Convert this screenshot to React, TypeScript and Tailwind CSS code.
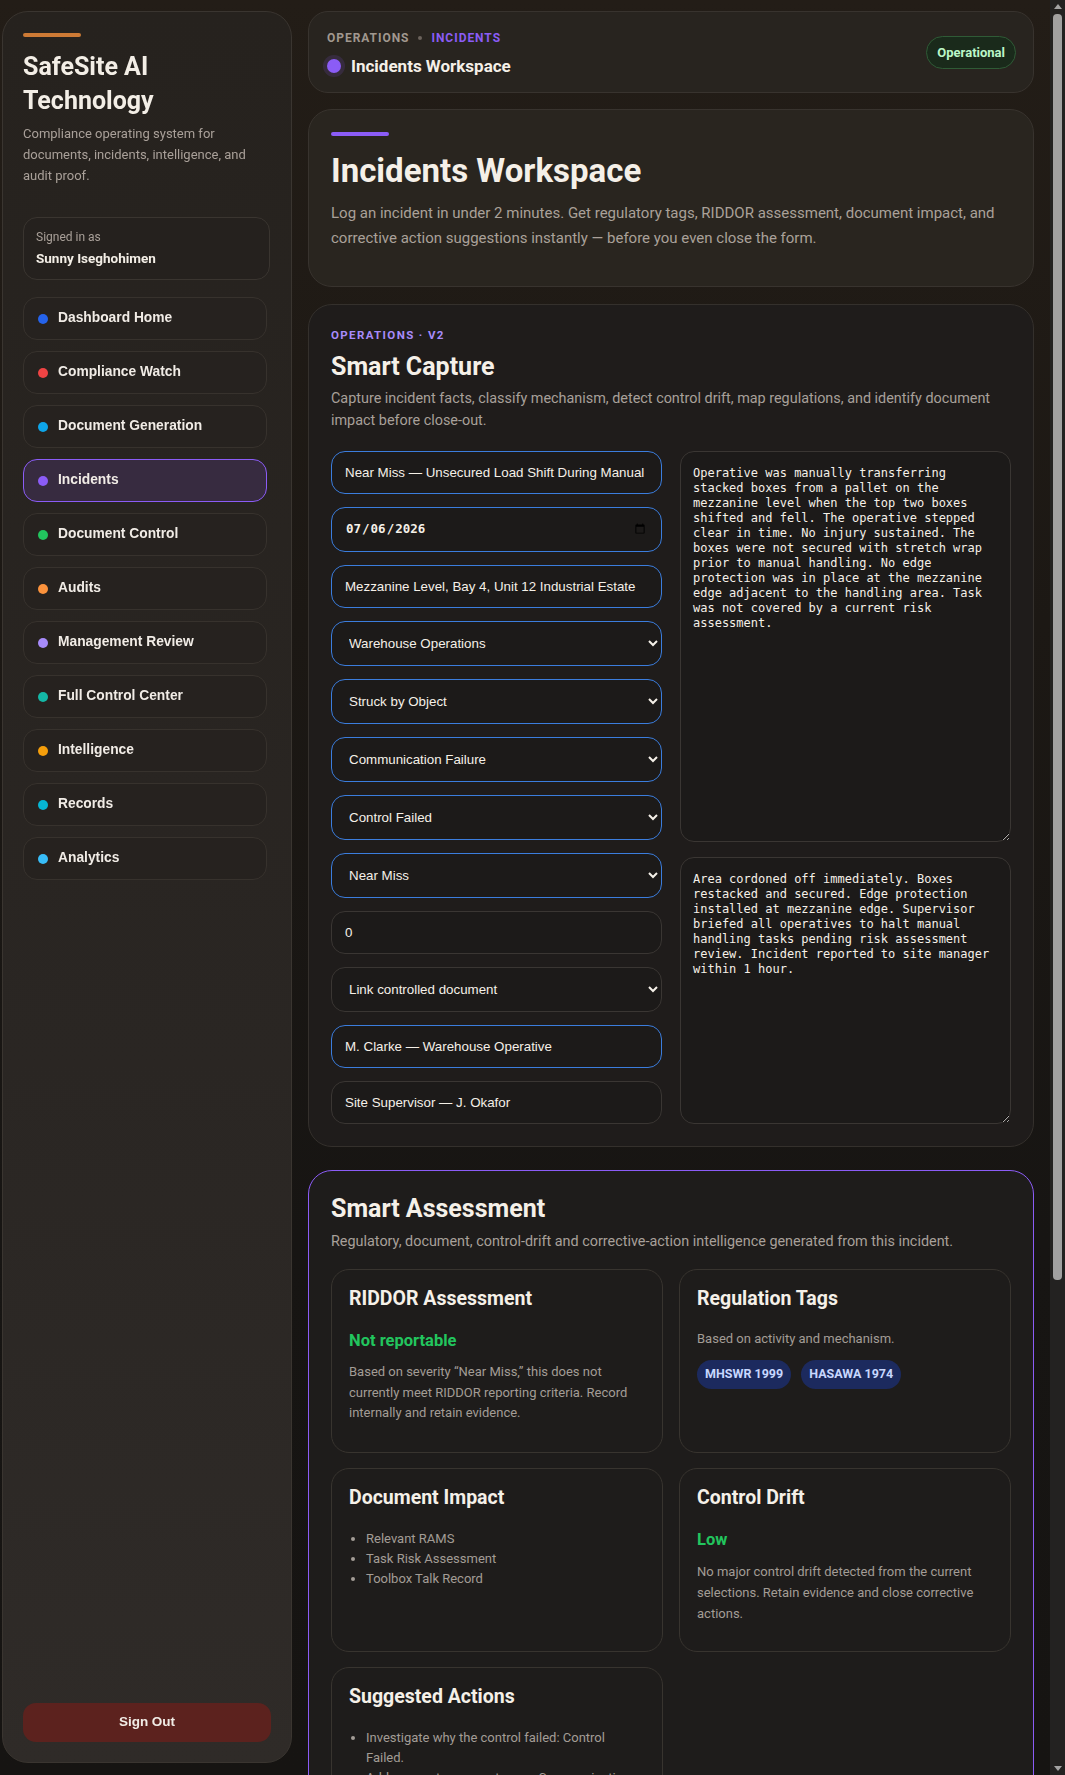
import React, { useEffect, useRef } from "react";

const navItems: { label: string; dot: string; active?: boolean }[] = [
  { label: "Dashboard Home", dot: "bg-[#2563eb]" },
  { label: "Compliance Watch", dot: "bg-[#ef4444]" },
  { label: "Document Generation", dot: "bg-[#0ea5e9]" },
  { label: "Incidents", dot: "bg-[#8b5cf6]", active: true },
  { label: "Document Control", dot: "bg-[#22c55e]" },
  { label: "Audits", dot: "bg-[#fb923c]" },
  { label: "Management Review", dot: "bg-[#a78bfa]" },
  { label: "Full Control Center", dot: "bg-[#14b8a6]" },
  { label: "Intelligence", dot: "bg-[#f59e0b]" },
  { label: "Records", dot: "bg-[#06b6d4]" },
  { label: "Analytics", dot: "bg-[#38bdf8]" },
];

const inputBase =
  "w-full rounded-[14px] border bg-[#1c1a19] px-[13px] text-[13.33px] text-[#f5f0e8] font-['Liberation_Sans',Arial,sans-serif] outline-none";

function TextField({ value, blue }: { value: string; blue?: boolean }) {
  return (
    <input
      type="text"
      defaultValue={value}
      className={`${inputBase} h-[43px] ${blue ? "border-[#3b7ddd]" : "border-[#3a3633]"}`}
    />
  );
}

function SelectField({ value, blue }: { value: string; blue?: boolean }) {
  return (
    <select
      defaultValue={value}
      className={`${inputBase} h-[45px] ${blue ? "border-[#3b7ddd]" : "border-[#3a3633]"}`}
    >
      <option value={value}>{value}</option>
    </select>
  );
}

function SubCard({ title, children }: { title: string; children: React.ReactNode }) {
  return (
    <div className="min-h-[184px] rounded-[18px] border border-[#38342f] bg-[#1e1c1b] px-[17px] pt-[15px] pb-5">
      <h3 className="text-[19.5px] font-bold leading-[28px] text-[#f5f0e8]">{title}</h3>
      {children}
    </div>
  );
}

function ScrollbarStrip() {
  return (
    <div className="flex h-screen w-[15px] shrink-0 flex-col items-center bg-[#232221]">
      <div className="mt-[4px] h-0 w-0 border-x-[4px] border-b-[5px] border-x-transparent border-b-[#a3a3a3]" />
      <div className="mt-[5px] h-[1266px] w-[9px] rounded-[4px] bg-[#a1a1a1]" />
      <div className="mt-auto mb-[4px] h-0 w-0 border-x-[4px] border-t-[5px] border-x-transparent border-t-[#a3a3a3]" />
    </div>
  );
}

export default function App() {
  const ta2 = useRef<HTMLTextAreaElement>(null);
  useEffect(() => {
    const el = ta2.current;
    if (el) {
      el.focus();
      const n = el.value.length;
      el.setSelectionRange(n, n);
    }
  }, []);

  return (
    <div className="flex h-screen w-full overflow-hidden bg-[#181614]">
      <div className="h-screen w-[1050px] shrink-0 overflow-y-auto [color-scheme:dark] bg-[linear-gradient(180deg,#231d17_0%,#1c1814_35%,#171513_70%,#161412_100%)] font-['Roboto',sans-serif] text-[#f5f0e8]">
        <div className="flex w-[1050px] items-start gap-4 pl-[2px] pr-4 pt-[11px] pb-8">
          {/* Sidebar */}
          <aside className="sticky top-[11px] flex h-[1752px] w-[290px] shrink-0 flex-col rounded-[26px] border border-[#3a3530] bg-[linear-gradient(180deg,#26221e_0%,#2a2623_60%,#2f2b28_100%)] px-5 pt-[21px] pb-5">
            <div className="h-1 w-[58px] rounded-full bg-[#cd7a35]" />
            <h1 className="mt-[13px] text-[25px] font-bold leading-[34px] text-[#f3eee6]">
              SafeSite AI
              <br />
              Technology
            </h1>
            <p className="mt-[5px] text-[13px] leading-[21px] text-[#a9a099]">
              Compliance operating system for documents, incidents, intelligence, and audit proof.
            </p>
            <div className="mt-[31px] h-[63px] w-[247px] rounded-[14px] border border-[#3a3530] bg-[#25211e] px-[12px] pt-[10px]">
              <div className="text-[12px] leading-[18px] text-[#a9a099]">Signed in as</div>
              <div className="mt-[3px] text-[13.5px] font-bold leading-[18px] text-[#f3eee6]">Sunny Iseghohimen</div>
            </div>
            <nav className="mt-[17px] flex w-[244px] flex-col gap-[11px]">
              {navItems.map((item) => (
                <div
                  key={item.label}
                  className={
                    item.active
                      ? "flex h-[43px] items-center gap-[10px] rounded-[14px] border border-[#8b5cf6] bg-[#372b40] pl-[14px]"
                      : "flex h-[43px] items-center gap-[10px] rounded-[14px] border border-[#37322d] bg-[#26221f] pl-[14px]"
                  }
                >
                  <span className={`h-[10px] w-[10px] rounded-full ${item.dot}`} />
                  <span className="font-['Liberation_Sans',Arial,sans-serif] text-[13.8px] font-bold text-[#f1ece6]">
                    {item.label}
                  </span>
                </div>
              ))}
            </nav>
            <button className="mt-auto h-[39px] w-[248px] rounded-[13px] bg-[#5c221e] font-['Liberation_Sans',Arial,sans-serif] text-[13.5px] font-bold text-[#f1ece6]">
              Sign Out
            </button>
          </aside>

          {/* Main */}
          <main className="flex w-[726px] shrink-0 flex-col">
            {/* Header */}
            <header className="flex h-[82px] items-start justify-between rounded-[20px] border border-[#38332e] bg-[#28241f] pl-[18px] pr-[17px] pt-[18px]">
              <div className="flex flex-col">
                <div className="flex items-center text-[12px] font-bold uppercase leading-[16px] tracking-[0.08em]">
                  <span className="text-[#a1988f]">Operations</span>
                  <span className="mx-[9px] h-[4px] w-[4px] rounded-full bg-[#6b635c]" />
                  <span className="text-[#8b5cf6]">Incidents</span>
                </div>
                <div className="mt-[8px] flex items-center gap-[10px]">
                  <span className="h-[14px] w-[14px] rounded-full bg-[#8b5cf6] shadow-[0_0_0_4px_rgba(139,92,246,0.14)]" />
                  <span className="text-[17px] font-bold leading-[24px] text-[#f5f0e8]">Incidents Workspace</span>
                </div>
              </div>
              <span className="mt-[6px] flex h-[33px] items-center rounded-full border border-[#2f5b36] bg-[#1a2a1b] px-[10px] text-[13px] font-bold text-[#bbf7c8]">
                Operational
              </span>
            </header>

            {/* Hero */}
            <section className="mt-4 rounded-[24px] border border-[#38332e] bg-[#29251f] px-[22px] pt-[22px] pb-[36px]">
              <div className="h-1 w-[58px] rounded-full bg-[#8b5cf6]" />
              <h1 className="mt-[16px] text-[33px] font-bold leading-[38px] text-[#f5f0e8]">Incidents Workspace</h1>
              <p className="mt-[11px] text-[15px] leading-[24.5px] text-[#aaa199]">
                Log an incident in under 2 minutes. Get regulatory tags, RIDDOR assessment, document impact, and
                corrective action suggestions instantly — before you even close the form.
              </p>
            </section>

            {/* Smart Capture */}
            <section className="mt-[17px] rounded-[24px] border border-[#34302c] bg-[#1f1c1b] px-[22px] pt-[22px] pb-[22px]">
              <div className="text-[11.5px] font-bold uppercase leading-[16px] tracking-[0.12em] text-[#a78bfa]">
                Operations · V2
              </div>
              <h2 className="mt-[8px] text-[25px] font-bold leading-[32px] text-[#f5f0e8]">Smart Capture</h2>
              <p className="mt-[5px] text-[14.4px] leading-[22px] text-[#a8a09a]">
                Capture incident facts, classify mechanism, detect control drift, map regulations, and identify
                document impact before close-out.
              </p>
              <div className="mt-[19px] grid grid-cols-2 gap-[18px]">
                <div className="flex flex-col gap-[13px]">
                  <TextField value="Near Miss — Unsecured Load Shift During Manual Handling" blue />
                  <input
                    type="date"
                    defaultValue="2026-07-06"
                    className="h-[45px] w-full rounded-[14px] border border-[#3b7ddd] bg-[#1c1a19] px-[13px] font-['DejaVu_Sans_Mono',monospace] text-[12.5px] font-bold text-[#f5f0e8] outline-none [color-scheme:light]"
                  />
                  <TextField value="Mezzanine Level, Bay 4, Unit 12 Industrial Estate" blue />
                  <SelectField value="Warehouse Operations" blue />
                  <SelectField value="Struck by Object" blue />
                  <SelectField value="Communication Failure" blue />
                  <SelectField value="Control Failed" blue />
                  <SelectField value="Near Miss" blue />
                  <TextField value="0" />
                  <SelectField value="Link controlled document" />
                  <TextField value="M. Clarke — Warehouse Operative" blue />
                  <TextField value="Site Supervisor — J. Okafor" />
                </div>
                <div className="flex flex-col gap-[15px]">
                  <textarea
                    defaultValue="Operative was manually transferring stacked boxes from a pallet on the mezzanine level when the top two boxes shifted and fell. The operative stepped clear in time. No injury sustained. The boxes were not secured with stretch wrap prior to manual handling. No edge protection was in place at the mezzanine edge adjacent to the handling area. Task was not covered by a current risk assessment."
                    className="h-[391px] w-full resize-y rounded-[14px] border border-[#3a3633] bg-[#1c1a19] px-[12px] pt-[14px] font-['DejaVu_Sans_Mono',monospace] text-[12px] leading-[15px] text-[#f5f0e8] outline-none"
                  />
                  <textarea
                    ref={ta2}
                    defaultValue="Area cordoned off immediately. Boxes restacked and secured. Edge protection installed at mezzanine edge. Supervisor briefed all operatives to halt manual handling tasks pending risk assessment review. Incident reported to site manager within 1 hour."
                    className="w-full flex-1 resize-y rounded-[14px] border border-[#3a3633] bg-[#1c1a19] px-[12px] pt-[14px] font-['DejaVu_Sans_Mono',monospace] text-[12px] leading-[15px] text-[#f5f0e8] outline-none"
                  />
                </div>
              </div>
            </section>

            {/* Smart Assessment */}
            <section className="mt-[23px] rounded-[24px] border border-[#8b5cf6] bg-[#1e1c1b] px-[22px] pt-[22px] pb-[24px]">
              <h2 className="text-[25px] font-bold leading-[32px] text-[#f5f0e8]">Smart Assessment</h2>
              <p className="mt-[6px] text-[14.4px] leading-[22px] text-[#a8a09a]">
                Regulatory, document, control-drift and corrective-action intelligence generated from this incident.
              </p>
              <div className="mt-[16px] grid grid-cols-2 gap-x-[16px] gap-y-[15px]">
                <SubCard title="RIDDOR Assessment">
                  <div className="mt-[16px] text-[16.5px] font-bold leading-[24px] text-[#22c55e]">Not reportable</div>
                  <p className="mt-[9px] text-[13px] leading-[20.5px] text-[#a39c96]">
                    Based on severity “Near Miss,” this does not currently meet RIDDOR reporting criteria. Record
                    internally and retain evidence.
                  </p>
                </SubCard>
                <SubCard title="Regulation Tags">
                  <p className="mt-[16px] text-[13px] leading-[20px] text-[#a39c96]">Based on activity and mechanism.</p>
                  <div className="mt-[11px] flex gap-[10px]">
                    <span className="flex h-[29px] items-center rounded-full bg-[#1c2a5e] px-[8px] text-[12.5px] font-bold text-[#c7d7fe]">
                      MHSWR 1999
                    </span>
                    <span className="flex h-[29px] items-center rounded-full bg-[#1c2a5e] px-[8px] text-[12.5px] font-bold text-[#c7d7fe]">
                      HASAWA 1974
                    </span>
                  </div>
                </SubCard>
                <SubCard title="Document Impact">
                  <ul className="mt-[17px] list-disc pl-[17px] text-[13px] leading-[20px] text-[#a39c96]">
                    <li>Relevant RAMS</li>
                    <li>Task Risk Assessment</li>
                    <li>Toolbox Talk Record</li>
                  </ul>
                </SubCard>
                <SubCard title="Control Drift">
                  <div className="mt-[16px] text-[16.5px] font-bold leading-[24px] text-[#22c55e]">Low</div>
                  <p className="mt-[9px] text-[13px] leading-[21px] text-[#a39c96]">
                    No major control drift detected from the current selections. Retain evidence and close corrective
                    actions.
                  </p>
                </SubCard>
                <SubCard title="Suggested Actions">
                  <ul className="mt-[17px] list-disc pl-[17px] text-[13px] leading-[20px] text-[#a39c96]">
                    <li>Investigate why the control failed: Control Failed.</li>
                    <li>Address root cause category: Communication Failure.</li>
                    <li>Review and update the relevant RAMS and task risk assessment.</li>
                    <li>Deliver a toolbox talk on load securing and edge protection.</li>
                    <li>Verify corrective actions are closed with evidence.</li>
                  </ul>
                </SubCard>
              </div>
            </section>

            <section className="mt-[23px] rounded-[24px] border border-[#34302c] bg-[#1f1c1b] px-[22px] pt-[22px] pb-[24px]">
              <h2 className="text-[25px] font-bold leading-[32px] text-[#f5f0e8]">Incident Log</h2>
              <p className="mt-[6px] text-[14.4px] leading-[22px] text-[#a8a09a]">
                Recently captured incidents and their close-out status.
              </p>
              <div className="mt-4 flex flex-col gap-3">
                {[
                  "Near Miss — Unsecured Load Shift",
                  "Slip on wet floor — Loading Bay 2",
                  "Forklift proximity alarm — Aisle 6",
                ].map((t) => (
                  <div
                    key={t}
                    className="flex h-[52px] items-center justify-between rounded-[14px] border border-[#38342f] px-4 text-[14px]"
                  >
                    <span>{t}</span>
                    <span className="text-[12px] font-bold text-[#a78bfa]">Open</span>
                  </div>
                ))}
              </div>
            </section>
            <div className="h-[150px]" />
          </main>
        </div>
      </div>
      <ScrollbarStrip />
    </div>
  );
}
